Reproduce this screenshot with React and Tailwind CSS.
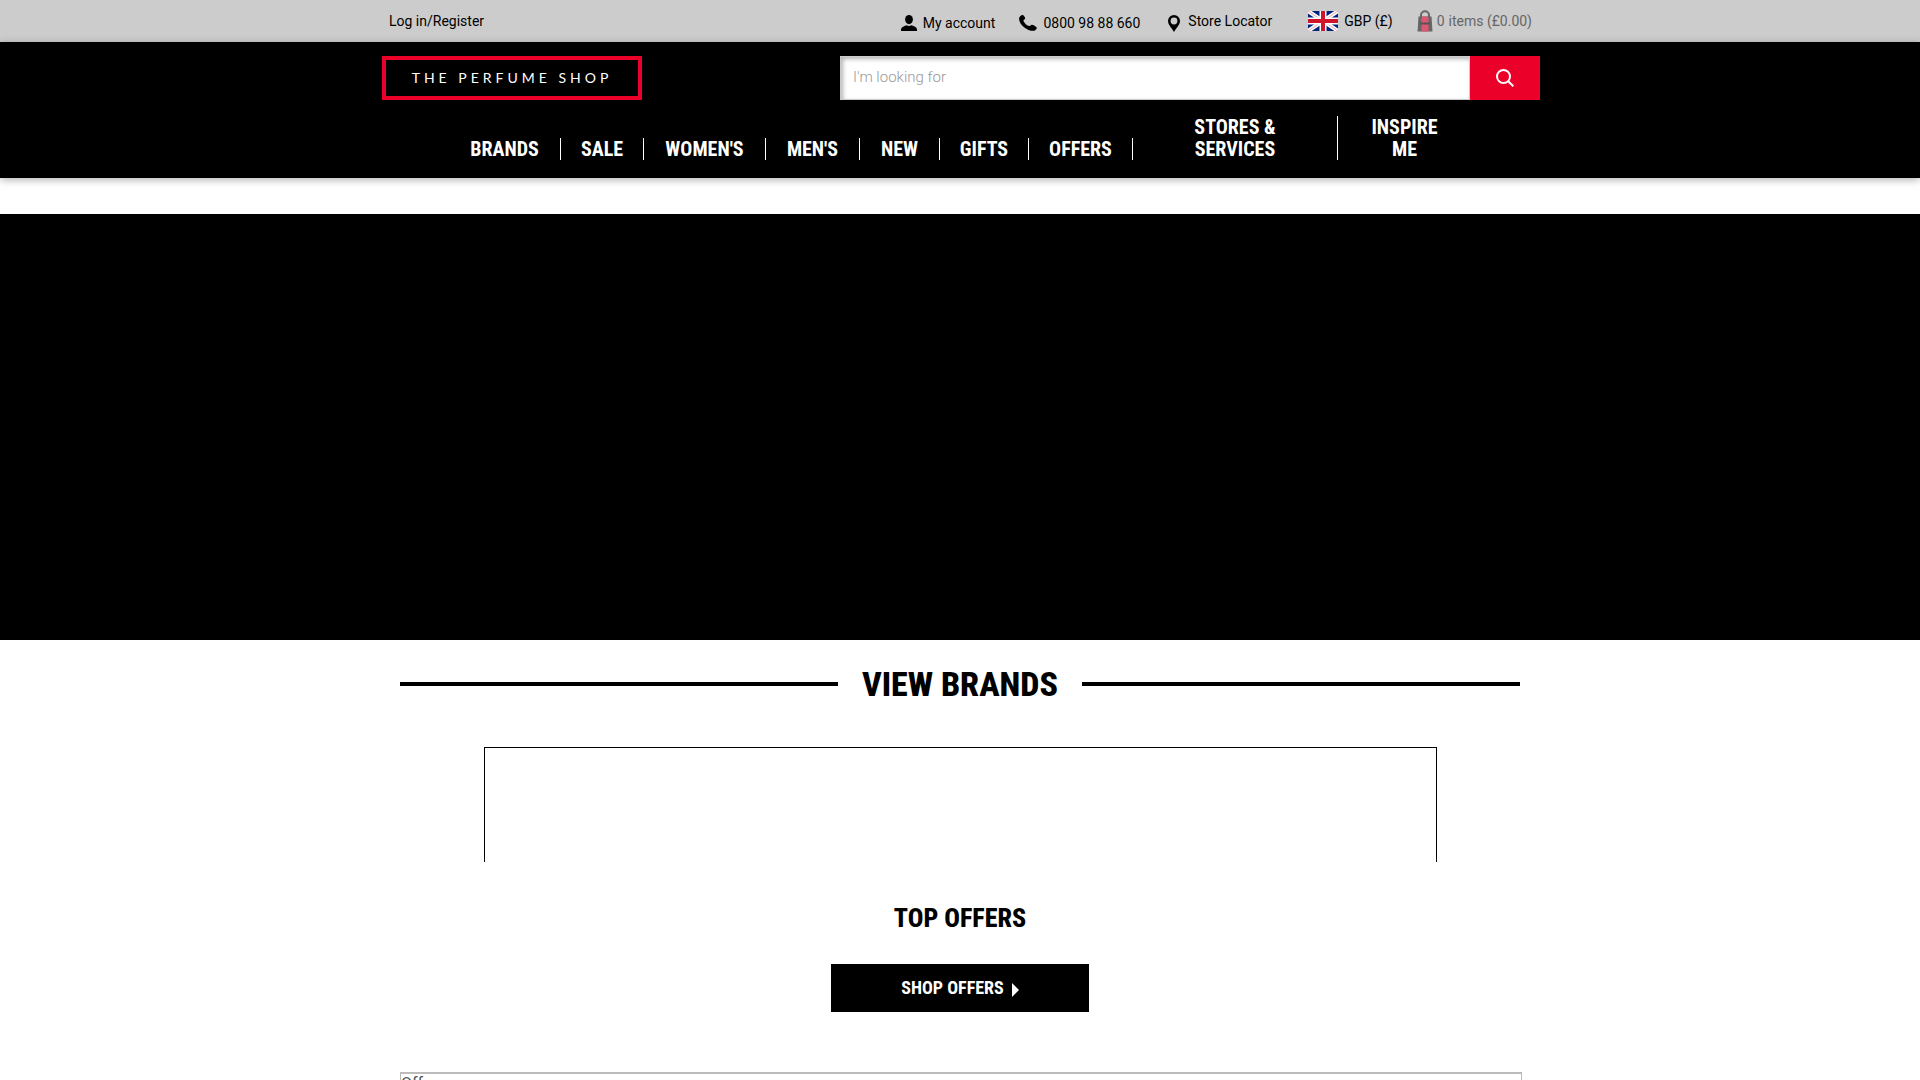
import React, { useState } from 'react';

const CONDENSED = "font-['Roboto_Condensed','Liberation_Sans_Narrow',sans-serif]";

const navItems = [
  { label: 'BRANDS', width: 'w-[112px]' },
  { label: 'SALE', width: 'w-[83px]' },
  { label: "WOMEN'S", width: 'w-[122px]' },
  { label: "MEN'S", width: 'w-[94px]' },
  { label: 'NEW', width: 'w-[80px]' },
  { label: 'GIFTS', width: 'w-[89px]' },
  { label: 'OFFERS', width: 'w-[104px]' },
  { label: 'STORES & SERVICES', width: 'w-[205px] px-14' },
  { label: 'INSPIRE ME', width: 'w-[133px] px-6' },
];

const UserIcon = () => (
  <svg className="w-4 h-4" viewBox="0 0 16 16" aria-hidden="true">
    <ellipse cx="8" cy="4.6" rx="3.9" ry="4.6" />
    <path d="M0 16v-1.6c0-2 2.600-3.400 5.600-4.200 1.500.9 3.300.9 4.800 0 3 .8 5.600 2.200 5.600 4.200V16z" />
  </svg>
);

const PhoneIcon = () => (
  <svg className="w-[18px] h-4" viewBox="0 0 18 16" aria-hidden="true">
    <path d="M1 1.400C2 .4 3.400-.1 4.300.2c1 .7 1.700 2 1.900 3.200-.1.900-1.500 1.300-1.800 2.100.5 2.300 3.300 5 5.800 5.600 1 0 1.500-1.400 2.600-1.400 1.600.1 4.200 1.700 4.900 2.900.4 1.100-.9 2.600-2.500 3.200C9.500 16.600.3 10.500.1 3.900.1 2.900.3 2.100 1 1.400z" />
  </svg>
);

const PinIcon = () => (
  <svg className="w-3 h-[17px] mt-1" viewBox="0 0 12 17" aria-hidden="true">
    <path fillRule="evenodd" d="M6 0a6 6 0 0 1 6 6c0 3.500-3.600 7-6 11C3.600 13 0 9.500 0 6a6 6 0 0 1 6-6zm0 2.600a3.400 3.400 0 1 0 0 6.800 3.400 3.400 0 0 0 0-6.800z" />
  </svg>
);

const FlagIcon = () => (
  <svg className="w-[30px] h-5" viewBox="0 0 30 20" aria-hidden="true">
    <path d="M0 0h30v20H0z" fill="#00247d" />
    <path d="M0 0l30 20M30 0L0 20" stroke="#fff" strokeWidth="4" />
    <path d="M0 0l12 8M30 0L18 8M0 20l12-8M30 20l-12-8" stroke="#e8a3ac" strokeWidth="1" />
    <path d="M15 0v20M0 10h30" stroke="#fff" strokeWidth="7" />
    <path d="M15 0v20M0 10h30" stroke="#cf142b" strokeWidth="4" />
  </svg>
);

const BagIcon = () => (
  <svg className="w-4 h-[22px]" viewBox="0 0 16 22" aria-hidden="true">
    <path d="M1.500 6.500h13L15.500 21.500H.5z" fill="#666" />
    <path d="M4.500 6.500h7v15h-7z" fill="#dc5872" />
    <path d="M4 8V5.300a4 4 0 0 1 8 0V8" fill="none" stroke="#666" strokeWidth="2" />
    <path d="M3 13.500h10" stroke="#555" strokeWidth="2" />
  </svg>
);

const SearchIcon = () => (
  <svg className="w-[18px] h-[18px]" viewBox="0 0 18 18" fill="none" stroke="#fff" strokeWidth="2" aria-hidden="true">
    <circle cx="7.500" cy="7.500" r="6.500" />
    <path d="M12.200 12.200l5.100 5.100" />
  </svg>
);

const TopBar = () => (
  <div className="bg-[#ccc] text-sm text-black">
    <div className="max-w-[1160px] mx-auto h-[42px] pl-[9px] pr-2 flex items-center justify-between">
      <a href="#login">Log in/Register</a>
      <div className="flex items-center">
        <a href="#account" className="flex items-center gap-[6px] pt-1 mr-6"><UserIcon />My account</a>
        <a href="#phone" className="flex items-center gap-[6px] pt-1 mr-7"><PhoneIcon />0800 98 88 660</a>
        <a href="#stores" className="flex items-center gap-2 mr-9"><PinIcon />Store Locator</a>
        <button type="button" className="flex items-center gap-[6px] mr-6"><FlagIcon />GBP (£)</button>
        <a href="#basket" className="flex items-center gap-1 text-[#666]">
          <BagIcon />
          <span>0</span>
          <span>items (£0.00)</span>
        </a>
      </div>
    </div>
  </div>
);

const Header = () => {
  const [query, setQuery] = useState('');

  return (
    <header className="bg-black shadow-[0_2px_8px_rgba(0,0,0,0.3)]">
      <div className="max-w-[1160px] mx-auto pt-[14px] pl-[2px] flex items-start justify-between">
        <a href="#home" className="w-[260px] h-11 border-4 border-[#ea0029] flex items-center justify-center font-['Lato',sans-serif] text-sm tracking-[4px] whitespace-nowrap text-white">
          THE PERFUME SHOP
        </a>
        <form className="w-[700px] h-11 flex" onSubmit={(e) => e.preventDefault()}>
          <input
            type="text"
            aria-label="Search"
            placeholder="I'm looking for"
            value={query}
            onChange={(e) => setQuery(e.target.value)}
            className="flex-1 min-w-0 bg-white border border-[#ccc] shadow-[inset_2px_2px_4px_rgba(0,0,0,0.3)] pl-3 pb-[2px] text-[15px] font-light text-black placeholder:text-[#999] outline-none"
          />
          <button type="submit" aria-label="Search" className="w-[70px] bg-[#ea0029] flex items-center justify-center">
            <SearchIcon />
          </button>
        </form>
      </div>
      <nav className="pt-4 pb-[18px]">
        <ul className="flex items-end justify-center">
          {navItems.map((item) => (
            <li key={item.label} className={`${item.width} border-r border-white last:border-r-0 text-center`}>
              <a href="#nav" className={`block ${CONDENSED} font-bold text-xl leading-[22px] text-white`}>
                {item.label}
              </a>
            </li>
          ))}
        </ul>
      </nav>
    </header>
  );
};

const App = () => {
  return (
    <div className="min-h-screen bg-white font-['Roboto',sans-serif]">
      <TopBar />
      <Header />

      <main>
        {/* Hero banner */}
        <div className="mt-9 h-[426px] bg-black" />

        <div className="max-w-[1120px] mx-auto pt-5">
          <div className="flex items-center gap-6">
            <div className="flex-1 h-1 bg-black" />
            <h2 className={`${CONDENSED} font-extrabold text-[34px] leading-[48px] text-black whitespace-nowrap`}>VIEW BRANDS</h2>
            <div className="flex-1 h-1 bg-black" />
          </div>

          {/* Brand slider frame */}
          <div className="mt-[39px] ml-[84px] mr-[83px] h-[115px] border border-b-0 border-black" />

          <div className="mt-9 flex flex-col items-center">
            <h2 className={`${CONDENSED} font-extrabold text-[26px] leading-[40px] text-black`}>TOP OFFERS</h2>
            <a href="#offers" className={`mt-[26px] w-[258px] h-12 bg-black text-white flex items-center justify-center gap-2 ${CONDENSED} font-bold text-lg`}>
              SHOP OFFERS
              <svg className="w-[7px] h-[14px] mt-1" viewBox="0 0 7 14" fill="#fff" aria-hidden="true"><path d="M0 0l7 7-7 7z" /></svg>
            </a>
          </div>

          <div className="mt-[60px] -mr-[2px] border-2 border-x border-[#bbb] text-base leading-5 text-[#555] overflow-hidden">Off</div>
        </div>
      </main>
    </div>
  );
};

export default App;
